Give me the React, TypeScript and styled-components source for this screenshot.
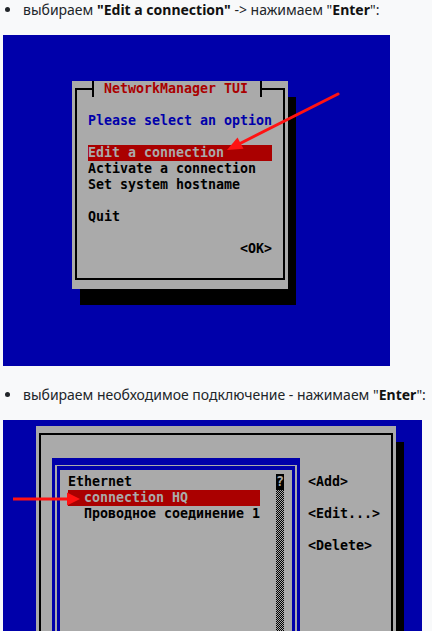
import React from "react";
import styled, { createGlobalStyle } from "styled-components";

const BLUE = "#0000aa";
const GRAY = "#aaaaaa";
const RED = "#aa0000";
const ARROW = "#ff1212";

const GlobalStyle = createGlobalStyle`
  html, body { margin: 0; padding: 0; background: #f8f9fa; }
  body { overflow: hidden; }
`;

const Page = styled.div`
  width: 432px;
  height: 631px;
  overflow: hidden;
  display: flex;
  flex-direction: column;
  font-family: "Noto Sans", "Open Sans", sans-serif;
`;

const Caption = styled.div<{ $first?: boolean }>`
  display: flex;
  align-items: center;
  flex: none;
  height: 24px;
  margin-top: ${(p) => (p.$first ? "-3px" : "16px")};
  font-size: 14px;
  color: #212529;
  white-space: nowrap;
`;

const Dot = styled.span`
  flex: none;
  width: 5px;
  height: 5px;
  border-radius: 50%;
  background: #212529;
  margin: 0 13px 0 5px;
`;

const Strong = styled.b`
  font-weight: 700;
  color: #111;
`;

const Screen = styled.div<{ $w: number; $h: number; $top: number; $left: number }>`
  position: relative;
  flex: none;
  box-sizing: border-box;
  margin: 14px 0 0 3px;
  width: ${(p) => p.$w}px;
  height: ${(p) => p.$h}px;
  padding: ${(p) => p.$top}px 0 0 ${(p) => p.$left}px;
  background: ${BLUE};
`;

const Window = styled.div<{ $w: number; $h: number }>`
  box-sizing: border-box;
  width: ${(p) => p.$w}px;
  height: ${(p) => p.$h}px;
  padding: 7px 3px 9px 3px;
  background: ${GRAY};
  box-shadow: 8px 16px 0 #000;
  display: flex;
`;

const Frame = styled.div<{ $row?: boolean }>`
  position: relative;
  flex: 1;
  display: flex;
  flex-direction: ${(p) => (p.$row ? "row" : "column")};
  align-items: stretch;
  border: 2px solid #000;
  padding: 23px 11px 0 11px;
  font-family: "DejaVu Sans Mono", "Liberation Mono", monospace;
  font-weight: bold;
  font-size: 13.29px;
  line-height: 16px;
  color: #000;
`;

const TitleTag = styled.div`
  position: absolute;
  top: -9px;
  left: 11px;
  height: 16px;
  display: flex;
`;

const Tick = styled.span<{ $side: "left" | "right" }>`
  position: relative;
  width: 8px;
  height: 16px;
  background: ${(p) =>
    p.$side === "left"
      ? `linear-gradient(to right, transparent 0 5px, ${GRAY} 5px)`
      : `linear-gradient(to right, ${GRAY} 0 4px, transparent 4px)`};
  &::before {
    content: "";
    position: absolute;
    left: 4px;
    top: 0;
    width: 2px;
    height: 16px;
    background: #000;
  }
`;

const TitleText = styled.span`
  padding: 0 8px;
  background: ${GRAY};
  color: ${RED};
  white-space: pre;
`;

const Line = styled.div<{ $tone?: "blue" | "sel"; $right?: boolean }>`
  height: 16px;
  white-space: pre;
  text-align: ${(p) => (p.$right ? "right" : "left")};
  color: ${(p) => (p.$tone === "blue" ? BLUE : p.$tone === "sel" ? GRAY : "#000")};
  background: ${(p) => (p.$tone === "sel" ? RED : "transparent")};
`;

const ListOuter = styled.div`
  flex: none;
  width: 248px;
  box-sizing: border-box;
  display: flex;
  border: solid ${BLUE};
  border-width: 7px 3px 0 3px;
  padding: 1px 2px 0 2px;
`;

const ListInner = styled.div`
  flex: 1;
  display: grid;
  grid-template-columns: 192px 16px 8px;
  border: solid ${BLUE};
  border-width: 4px 3px 0 3px;
  padding: 4px 8px 0 8px;
`;

const Items = styled.div`
  display: flex;
  flex-direction: column;
`;

const Scrollbar = styled.div`
  grid-column: 3;
  display: flex;
  flex-direction: column;
`;

const Thumb = styled.div`
  height: 16px;
  background: #000;
  color: ${GRAY};
  text-align: center;
`;

const Track = styled.div`
  flex: 1;
  background: repeating-conic-gradient(#000 0 25%, ${GRAY} 0 50%) 0 0 / 2px 2px;
`;

const Buttons = styled.div`
  display: flex;
  flex-direction: column;
  gap: 16px;
  margin-left: 8px;
  padding-top: 16px;
`;

const Overlay = styled.svg`
  position: absolute;
  left: 0;
  top: 0;
  width: 100%;
  height: 100%;
  pointer-events: none;
  overflow: visible;
`;

export default function App() {
  return (
    <Page>
      <GlobalStyle />
      <Caption $first>
        <Dot />
        <span>
          выбираем <Strong>"Edit a connection"</Strong> -&gt; нажимаем "<Strong>Enter</Strong>":
        </span>
      </Caption>
      <Screen $w={387} $h={331} $top={46} $left={69}>
        <Window $w={216} $h={208}>
          <Frame>
            <TitleTag>
              <Tick $side="left" />
              <TitleText>NetworkManager TUI</TitleText>
              <Tick $side="right" />
            </TitleTag>
            <Line $tone="blue">Please select an option</Line>
            <Line />
            <Line $tone="sel">Edit a connection</Line>
            <Line>Activate a connection</Line>
            <Line>Set system hostname</Line>
            <Line />
            <Line>Quit</Line>
            <Line />
            <Line $right>&lt;OK&gt;</Line>
          </Frame>
        </Window>
        <Overlay viewBox="0 0 387 331">
          <line x1="335" y1="59" x2="238" y2="108" stroke={ARROW} strokeWidth="3" strokeLinecap="round" />
          <polygon points="224,115 240.5,113.8 234.5,102.5" fill={ARROW} />
        </Overlay>
      </Screen>

      <Caption>
        <Dot />
        <span>
          выбираем необходимое подключение - нажимаем "<Strong>Enter</Strong>":
        </span>
      </Caption>
      <Screen $w={419} $h={240} $top={6} $left={33}>
        <Window $w={360} $h={300}>
          <Frame $row>
            <ListOuter>
              <ListInner>
                <Items>
                  <Line>Ethernet</Line>
                  <Line $tone="sel">{"  connection HQ"}</Line>
                  <Line>{"  Проводное соединение 1"}</Line>
                </Items>
                <Scrollbar>
                  <Thumb>?</Thumb>
                  <Track />
                </Scrollbar>
              </ListInner>
            </ListOuter>
            <Buttons>
              <Line>&lt;Add&gt;</Line>
              <Line>&lt;Edit...&gt;</Line>
              <Line>&lt;Delete&gt;</Line>
            </Buttons>
          </Frame>
        </Window>
        <Overlay viewBox="0 0 419 240">
          <line x1="10" y1="79" x2="66" y2="79" stroke={ARROW} strokeWidth="3" />
          <polygon points="64,72.5 77,79 64,85.5" fill={ARROW} />
        </Overlay>
      </Screen>
    </Page>
  );
}
